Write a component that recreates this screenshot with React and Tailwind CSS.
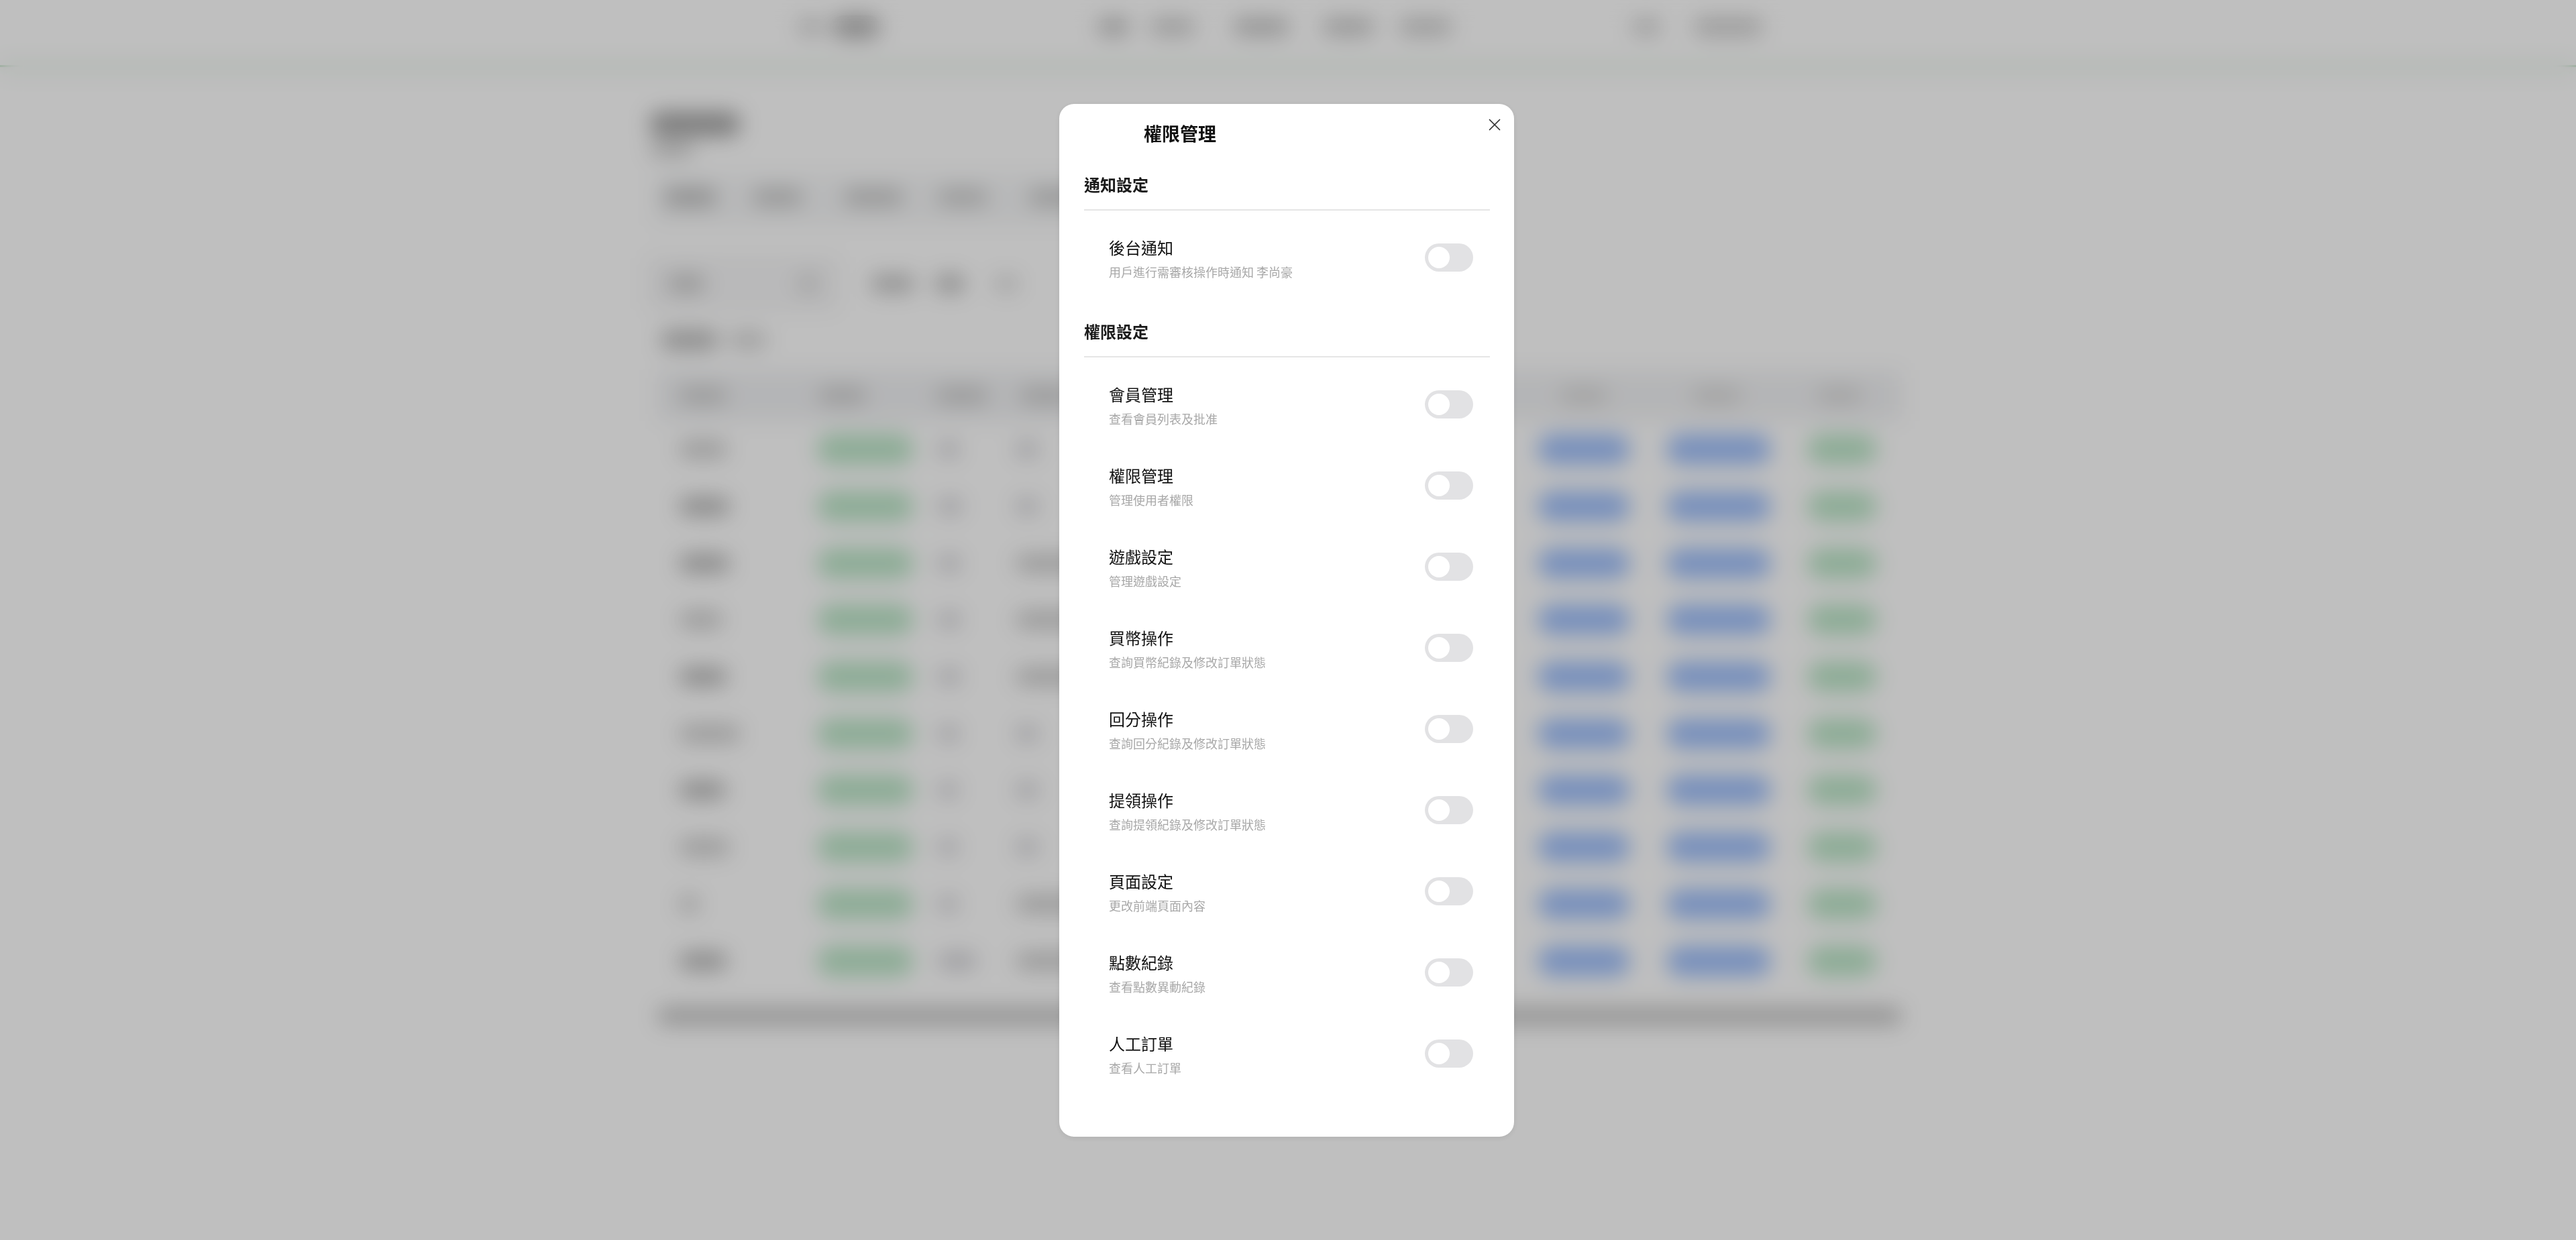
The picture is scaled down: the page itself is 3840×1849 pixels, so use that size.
import { X } from 'lucide-react';

const CJK = { fontFamily: '"Noto Sans CJK TC", "Noto Sans", sans-serif' };

const NOTIFY = [{ title: '後台通知', desc: '用戶進行需審核操作時通知 李尚豪' }];

const PERMS = [
  { title: '會員管理', desc: '查看會員列表及批准' },
  { title: '權限管理', desc: '管理使用者權限' },
  { title: '遊戲設定', desc: '管理遊戲設定' },
  { title: '買幣操作', desc: '查詢買幣紀錄及修改訂單狀態' },
  { title: '回分操作', desc: '查詢回分紀錄及修改訂單狀態' },
  { title: '提領操作', desc: '查詢提領紀錄及修改訂單狀態' },
  { title: '頁面設定', desc: '更改前端頁面內容' },
  { title: '點數紀錄', desc: '查看點數異動紀錄' },
  { title: '人工訂單', desc: '查看人工訂單' },
];

// widths of the blurred cells behind the dialog, one entry per table row
const ROWS = [
  { name: 72, dark: false, c3: 32, c4: 34 },
  { name: 76, dark: true, c3: 36, c4: 34 },
  { name: 76, dark: true, c3: 34, c4: 110 },
  { name: 66, dark: false, c3: 34, c4: 110 },
  { name: 72, dark: true, c3: 34, c4: 110 },
  { name: 92, dark: false, c3: 32, c4: 34 },
  { name: 70, dark: true, c3: 30, c4: 34 },
  { name: 76, dark: false, c3: 30, c4: 34 },
  { name: 30, dark: false, c3: 30, c4: 110 },
  { name: 72, dark: true, c3: 58, c4: 110 },
];

function Bar({ className }) {
  return <span className={`block rounded-full ${className}`} />;
}

function BackgroundPage() {
  return (
    <div className="flex h-full w-full flex-col bg-white">
      {/* top nav */}
      <div className="flex h-[100px] shrink-0 items-center border-b-[3px] border-[#b6dcbc] pb-[18px] shadow-[0_2px_14px_rgba(60,110,70,0.12)]">
        <div className="ml-[1188px] flex items-center gap-[12px]">
          <Bar className="h-[26px] w-[40px] bg-[#d4d4d4]" />
          <Bar className="h-[34px] w-[72px] bg-[#b4b4b4]" />
        </div>
        <div className="ml-[324px] flex items-center">
          <Bar className="h-[24px] w-[48px] bg-[#bcbcbc]" />
          <Bar className="ml-[30px] h-[24px] w-[68px] bg-[#cacaca]" />
          <Bar className="ml-[56px] h-[24px] w-[84px] bg-[#c0c0c0]" />
          <Bar className="ml-[49px] h-[24px] w-[78px] bg-[#c4c4c4]" />
          <Bar className="ml-[36px] h-[24px] w-[80px] bg-[#cacaca]" />
        </div>
        <div className="ml-[267px] flex items-center gap-[48px]">
          <Bar className="h-[24px] w-[44px] bg-[#d0d0d0]" />
          <Bar className="h-[28px] w-[104px] bg-[#d0d0d0]" />
        </div>
      </div>

      {/* page title */}
      <div className="ml-[968px] mt-[67px] flex flex-col gap-[10px]">
        <Bar className="h-[36px] w-[136px] bg-[#a4a4a4]" />
        <Bar className="h-[20px] w-[66px] bg-[#c8c8c8]" />
      </div>

      {/* tabs */}
      <div className="ml-[975px] mt-[26px] flex h-[72px] w-[900px] items-center border-b-2 border-[#ddd] bg-[#f6f7f8]">
        <Bar className="ml-[14px] h-[26px] w-[80px] bg-[#bdbdbd]" />
        <Bar className="ml-[52px] h-[24px] w-[76px] bg-[#c6c6c6]" />
        <Bar className="ml-[60px] h-[24px] w-[90px] bg-[#c6c6c6]" />
        <Bar className="ml-[50px] h-[24px] w-[76px] bg-[#cacaca]" />
        <Bar className="ml-[60px] h-[24px] w-[80px] bg-[#c6c6c6]" />
      </div>

      {/* filters */}
      <div className="ml-[967px] mt-[50px] flex h-[84px] items-center">
        <div className="flex h-[76px] w-[281px] items-center justify-between rounded-lg border-2 border-[#ddd] bg-[#f7f7f8] px-[26px]">
          <Bar className="h-[24px] w-[56px] bg-[#c4c4c4]" />
          <Bar className="h-[30px] w-[30px] bg-[#d6d6d6]" />
        </div>
        <Bar className="ml-[50px] h-[24px] w-[66px] bg-[#bcbcbc]" />
        <Bar className="ml-[30px] h-[24px] w-[44px] bg-[#b4b4b4]" />
        <Bar className="ml-[44px] h-[24px] w-[36px] bg-[#d8d8d8]" />
      </div>

      {/* count */}
      <div className="ml-[985px] mt-[28px] flex items-center gap-[16px]">
        <Bar className="h-[28px] w-[86px] bg-[#b8b8b8]" />
        <Bar className="h-[24px] w-[56px] bg-[#d0d0d0]" />
      </div>

      {/* table */}
      <div className="ml-[980px] mt-[31px] w-[1855px]">
        <div className="grid h-[76px] grid-cols-[210px_190px_120px_770px_190px_210px_165px] items-center bg-[#f1f2f4]">
          <Bar className="ml-[32px] h-[24px] w-[72px] bg-[#cccccc]" />
          <Bar className="ml-[30px] h-[24px] w-[72px] bg-[#cccccc]" />
          <Bar className="ml-[15px] h-[24px] w-[78px] bg-[#cccccc]" />
          <Bar className="ml-[20px] h-[24px] w-[78px] bg-[#cccccc]" />
          <Bar className="ml-[55px] h-[24px] w-[72px] bg-[#d8d8d8]" />
          <Bar className="ml-[62px] h-[24px] w-[74px] bg-[#d8d8d8]" />
          <Bar className="ml-[38px] h-[24px] w-[68px] bg-[#d8d8d8]" />
        </div>
        {ROWS.map((r, i) => (
          <div
            key={i}
            className="grid h-[84.7px] grid-cols-[210px_190px_120px_770px_190px_210px_165px] items-center"
          >
            <div className="pl-[32px]">
              <span
                className={`block h-[26px] rounded-full ${r.dark ? 'bg-[#b4b4b4]' : 'bg-[#cccccc]'}`}
                style={{ width: r.name }}
              />
            </div>
            <div className="pl-[28px]">
              <Bar className="h-[46px] w-[144px] bg-[#bce6c8]" />
            </div>
            <div className="pl-[18px]">
              <span className="block h-[24px] rounded-full bg-[#cfcfd4]" style={{ width: r.c3 }} />
            </div>
            <div className="pl-[14px]">
              <span
                className={`block h-[24px] rounded-full ${r.c4 > 50 ? 'bg-[#c8c8c8]' : 'bg-[#cfcfd4]'}`}
                style={{ width: r.c4 }}
              />
            </div>
            <div className="pl-[22px]">
              <Bar className="h-[46px] w-[138px] bg-[#a0c0fa]" />
            </div>
            <div className="pl-[24px]">
              <Bar className="h-[46px] w-[156px] bg-[#a0c0fa]" />
            </div>
            <div className="pl-[24px]">
              <Bar className="h-[46px] w-[104px] bg-[#bce6c8]" />
            </div>
          </div>
        ))}
        <div className="mt-[27px] h-[26px] rounded-full bg-[#c2c2c2]" />
      </div>
    </div>
  );
}

function Toggle() {
  return (
    <button
      type="button"
      role="switch"
      aria-checked="false"
      className="flex h-[42px] w-[72px] shrink-0 items-center rounded-full bg-[#e2e2e4] pl-[5px]"
    >
      <span className="block h-[32px] w-[32px] rounded-full bg-white" />
    </button>
  );
}

function SettingRow({ title, desc }) {
  return (
    <div className="flex h-[121px] items-center justify-between pl-[37px] pr-[25px]">
      <div className="mt-[6px]">
        <div className="text-[24px] font-normal leading-[36px] text-[#111]">{title}</div>
        <div className="text-[18px] leading-[36px] text-[#a8a8a8]">{desc}</div>
      </div>
      <Toggle />
    </div>
  );
}

function Section({ title, rows }) {
  return (
    <section>
      <h3 className="flex h-[69px] items-start border-b-2 border-[#e5e5e5] pt-[12px] text-[24px] font-semibold leading-[36px] text-[#1a1a1a]">
        {title}
      </h3>
      <div className="pt-[10px]">
        {rows.map((r) => (
          <SettingRow key={r.title} title={r.title} desc={r.desc} />
        ))}
      </div>
    </section>
  );
}

export default function App() {
  return (
    <div className="relative h-[1849px] w-[3840px] overflow-hidden" style={CJK}>
      <BackgroundPage />

      <div className="absolute inset-0 flex items-center bg-black/25 backdrop-blur-[16px]">
        <div className="relative ml-[1579px] h-[1540px] w-[678px] rounded-[22px] bg-white pl-[37px] pr-[36px] shadow-[0_2px_10px_rgba(0,0,0,0.08)]">
          <button type="button" className="absolute right-[14px] top-[16px] text-[#333]">
            <X className="h-[30px] w-[30px]" strokeWidth={1.4} />
          </button>
          <h2 className="flex h-[90px] items-center pl-[89px] text-[27px] font-bold text-[#111]">權限管理</h2>
          <Section title="通知設定" rows={NOTIFY} />
          <div className="mt-[19px]">
            <Section title="權限設定" rows={PERMS} />
          </div>
        </div>
      </div>
    </div>
  );
}
